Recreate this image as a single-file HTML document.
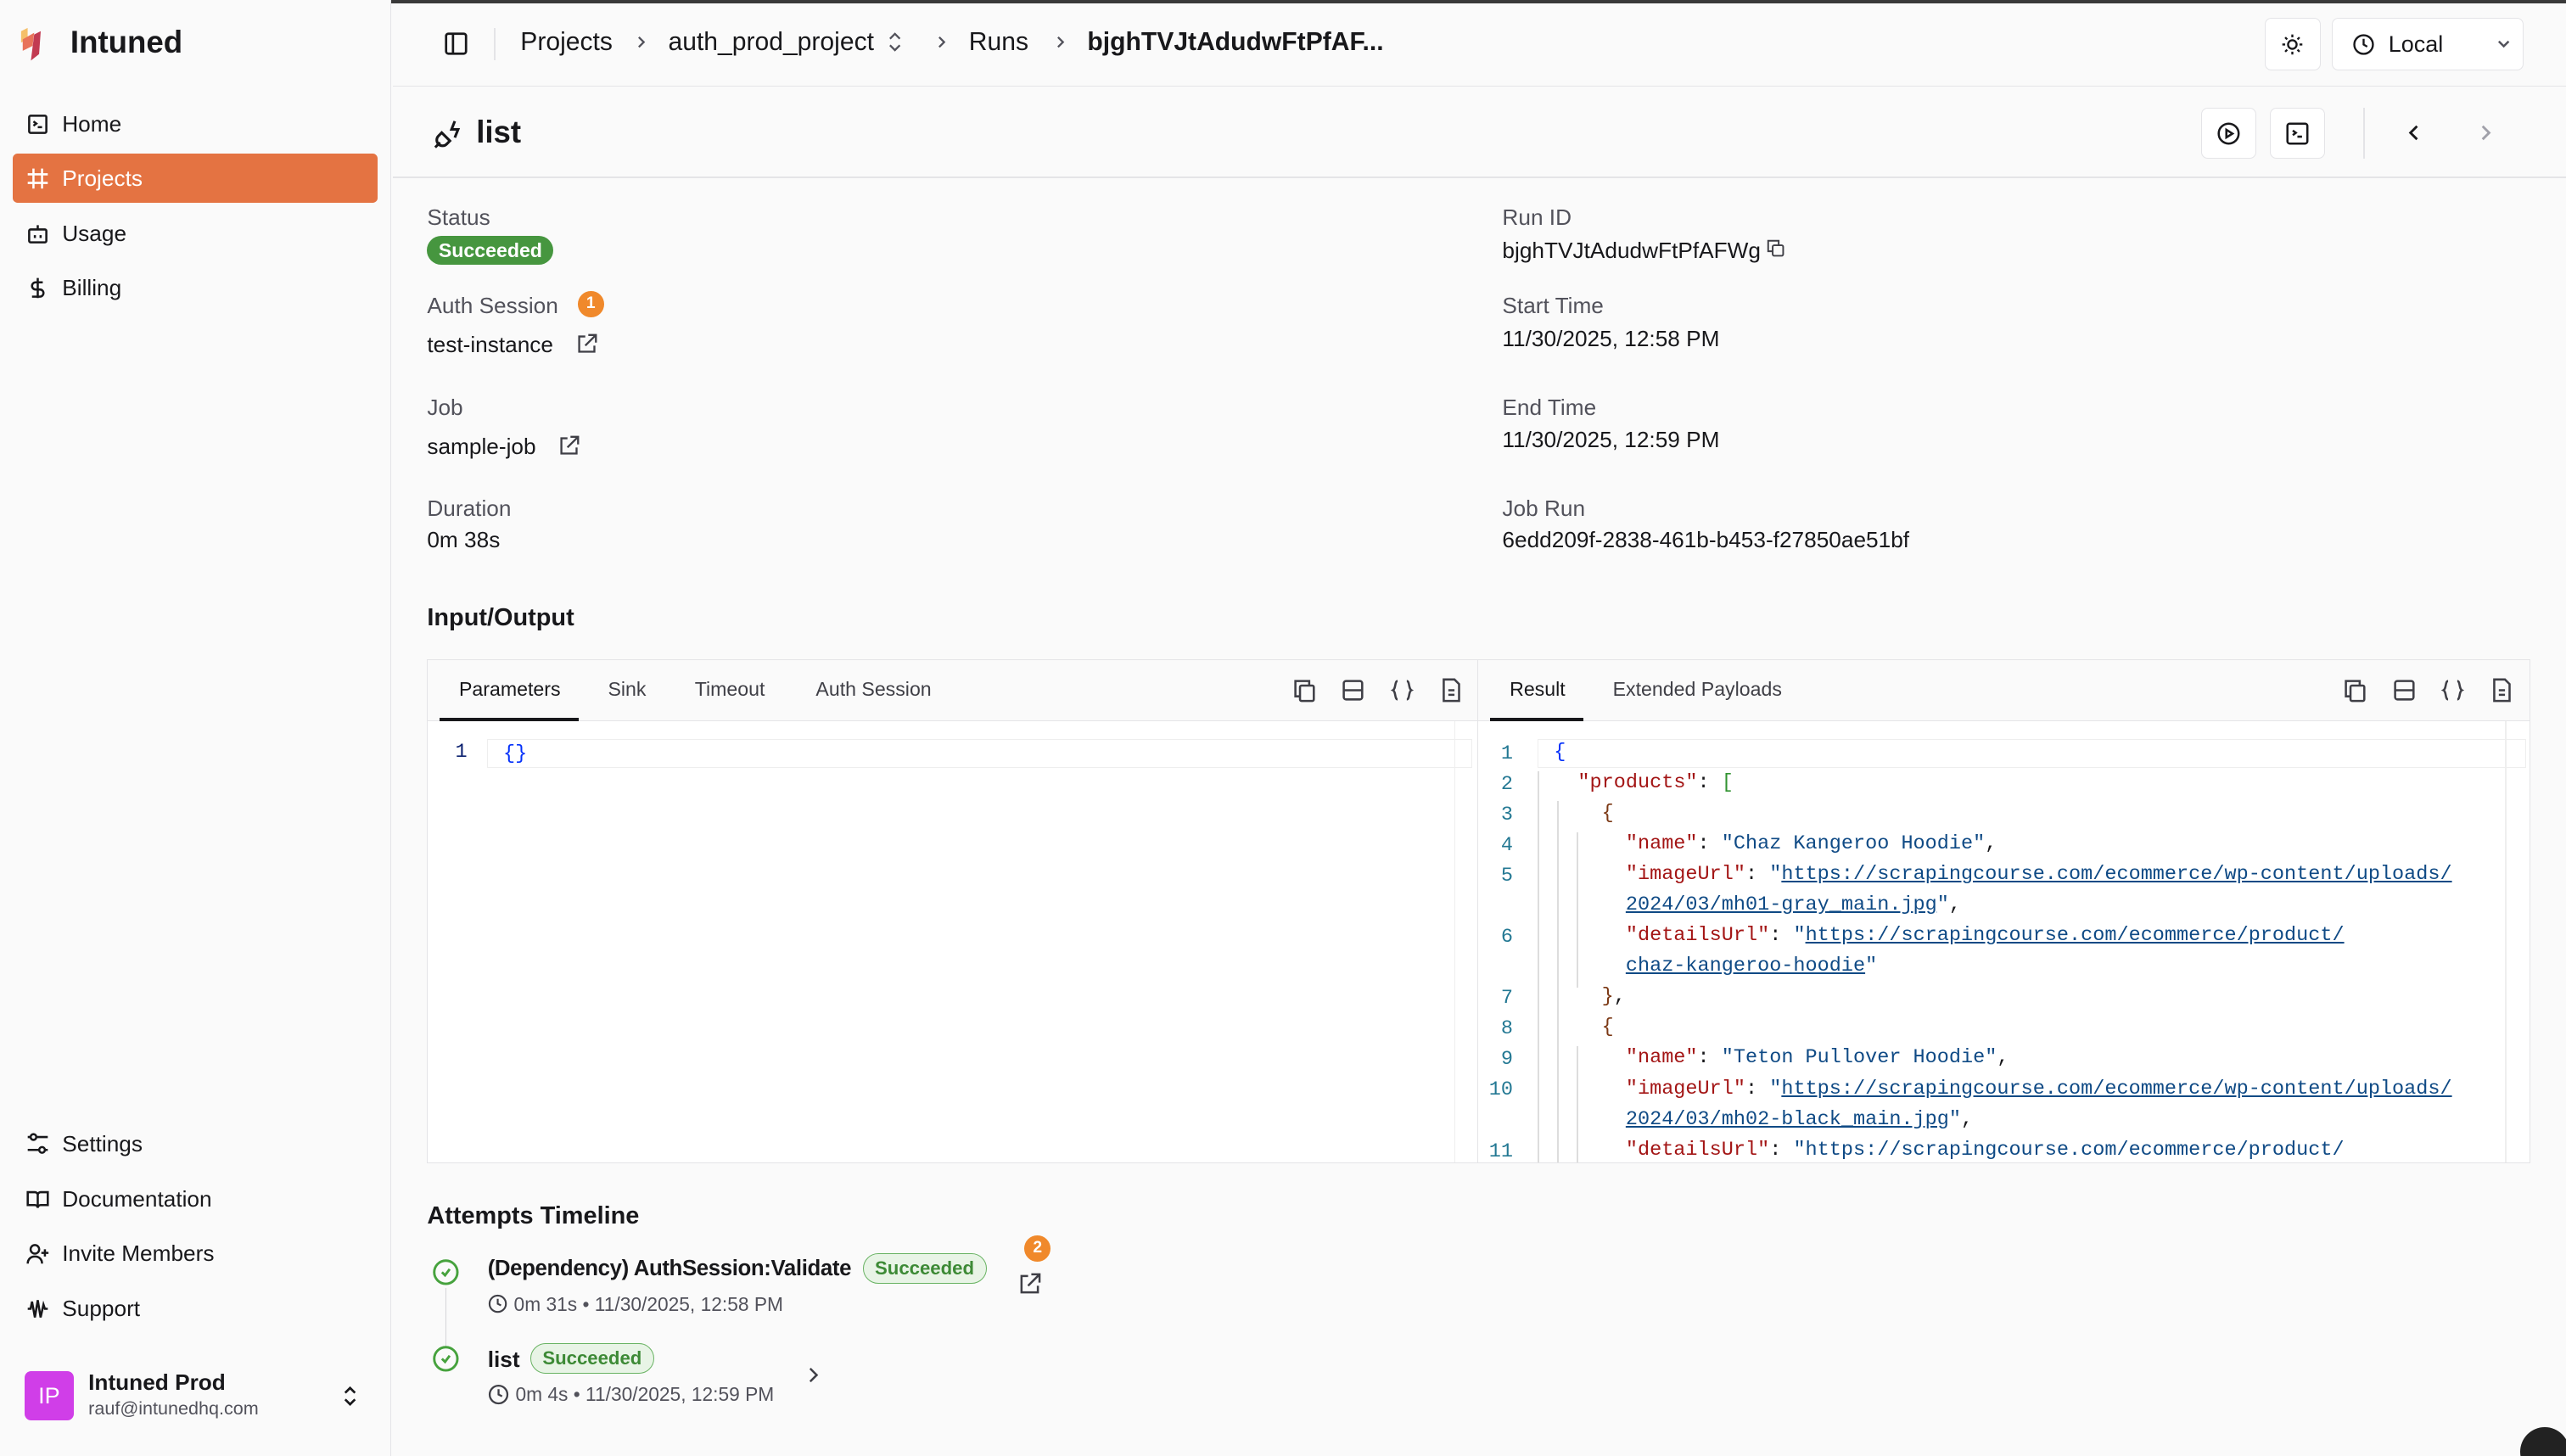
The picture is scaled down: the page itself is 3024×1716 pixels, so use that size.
<!DOCTYPE html>
<html><head><meta charset="utf-8">
<style>
*{box-sizing:border-box;margin:0;padding:0}
html,body{width:3024px;height:1716px;overflow:hidden;background:#fafafa}
#root{zoom:1.92857;width:1568px;height:890px;position:relative;font-family:"Liberation Sans",sans-serif;color:#18181b;font-size:14px}
.abs{position:absolute}
.side{left:0;top:0;width:239px;height:890px;border-right:1px solid #e4e4e7;background:#fafafa}
.nav{position:absolute;left:8px;width:223px;height:30px;display:flex;align-items:center;padding-left:8px;gap:8px;font-size:13.6px;border-radius:3px}
.nav svg{width:14px;height:14px;stroke:#18181b;fill:none;stroke-width:1.5}
.lbl{font-size:13.6px;color:#52525b}
.val{font-size:13.6px;color:#18181b}
.badge{display:inline-block;background:#46963f;color:#fff;font-size:12px;border-radius:9px;padding:2px 7px;font-weight:bold}
.obadge{display:inline-flex;width:16px;height:16px;border-radius:50%;background:#f0892b;color:#fff;font-size:10px;font-weight:bold;align-items:center;justify-content:center}
.gbadge{display:inline-block;border:1px solid #69b363;background:#e8f4e6;color:#3d8a36;font-size:11.5px;border-radius:10px;padding:2px 7px;font-weight:bold}
.panel{background:#fff;border:1px solid #e4e4e7}
.tabs{height:37px;background:#fafafa;border-bottom:1px solid #e4e4e7;position:relative}
.tab{position:absolute;top:11px;font-size:12px;color:#3f3f46}
.code{font-family:"Liberation Mono",monospace;font-size:12.2px;line-height:18.7px;white-space:pre}
.ln{position:absolute;color:#237893;font-family:"Liberation Mono",monospace;font-size:12.2px;text-align:right;width:24px}
.k{color:#a31515}.s{color:#0f4a85}.u{color:#0f4a85;text-decoration:underline}
.ico svg{stroke:#3f3f46;fill:none;stroke-width:1.4}
</style></head><body><div id="root">
<div class="abs" style="left:0;top:0;width:1568px;height:2px;background:#3a3a3a"></div>
<div class="abs side">
 <div class="abs" style="left:11px;top:15px;width:22px;height:24px">
  <svg width="22" height="24" viewBox="0 0 22 24"><path d="M2 4 L6 2 L6 9 L2 11Z" fill="#f5c06a"/><path d="M3 9 L10 5 L9 13 L3 16Z" fill="#e8735a"/><path d="M10 6 L14 4 L13 18 L8 22Z" fill="#c23b52"/></svg>
 </div>
 <div class="abs" style="left:43px;top:15px;font-size:19px;font-weight:bold">Intuned</div>
 <div class="nav" style="top:61px"><svg viewBox="0 0 16 16"><rect x="2" y="2" width="12" height="12" rx="1"/><path d="M5 6l2 1.5-2 1.5M8 10h3"/></svg>Home</div>
 <div class="nav" style="top:94px;background:#e47342;color:#fff"><svg viewBox="0 0 16 16" style="stroke:#fff"><path d="M5 1v14M11 1v14M1 5h14M1 11h14"/></svg>Projects</div>
 <div class="nav" style="top:128px"><svg viewBox="0 0 16 16"><rect x="2" y="5" width="12" height="9" rx="1"/><path d="M8 2v3M6 9v2M10 9v2"/></svg>Usage</div>
 <div class="nav" style="top:161px"><svg viewBox="0 0 16 16"><path d="M8 1v14M11.5 4H6.5a2.5 2.5 0 0 0 0 5h3a2.5 2.5 0 0 1 0 5H4"/></svg>Billing</div>
 <div class="nav" style="top:684px"><svg viewBox="0 0 16 16"><path d="M7 3h8M1 3h2M13 12h2M1 12h8"/><circle cx="5" cy="3" r="2"/><circle cx="11" cy="12" r="2"/></svg>Settings</div>
 <div class="nav" style="top:718px"><svg viewBox="0 0 16 16"><path d="M1 3h5a2 2 0 0 1 2 2v9a2 2 0 0 0-2-2H1zM15 3h-5a2 2 0 0 0-2 2v9a2 2 0 0 1 2-2h5z"/></svg>Documentation</div>
 <div class="nav" style="top:751px"><svg viewBox="0 0 16 16"><circle cx="6" cy="5" r="3"/><path d="M1 15c0-3 2-5 5-5s5 2 5 5M13 5v5M10.5 7.5h5"/></svg>Invite Members</div>
 <div class="nav" style="top:785px"><svg viewBox="0 0 16 16"><path d="M1 8h2l1-5 2 11 2-12 2 12 2-9 1 3h2"/></svg>Support</div>
 <div class="abs" style="left:15px;top:838px;width:30px;height:30px;border-radius:4px;background:#d03ee8;color:#fff;font-size:14px;display:flex;align-items:center;justify-content:center">IP</div>
 <div class="abs" style="left:54px;top:837px;font-size:13.6px;font-weight:bold">Intuned Prod</div>
 <div class="abs" style="left:54px;top:854px;font-size:11.2px;color:#52525b">rauf@intunedhq.com</div>
 <div class="abs" style="left:208px;top:845px"><svg width="12" height="16" viewBox="0 0 12 16" fill="none" stroke="#18181b" stroke-width="1.4"><path d="M3 6l3-3 3 3M3 10l3 3 3-3"/></svg></div>
</div>
<!-- header -->
<div class="abs" style="left:240px;top:2px;width:1328px;height:51px;border-bottom:1px solid #e4e4e7"></div>
<div class="abs" style="left:271px;top:19px"><svg width="15" height="15" viewBox="0 0 16 16" fill="none" stroke="#18181b" stroke-width="1.5"><rect x="1.5" y="1.5" width="13" height="13" rx="1.5"/><path d="M6 2v12"/></svg></div>
<div class="abs" style="left:302px;top:17px;width:1px;height:20px;background:#e4e4e7"></div>
<div class="abs" style="left:318px;top:17px;font-size:15.6px;display:flex;align-items:center;white-space:nowrap">
 <span>Projects</span><svg style="margin:0 12px 0 14px" width="8" height="10" viewBox="0 0 8 10" fill="none" stroke="#52525b" stroke-width="1.2"><path d="M2 2l3 3-3 3"/></svg><span>auth_prod_project</span><svg style="margin-left:8px" width="10" height="14" viewBox="0 0 10 14" fill="none" stroke="#52525b" stroke-width="1.2"><path d="M2 5l3-3 3 3M2 9l3 3 3-3"/></svg><svg style="margin:0 12px 0 20px" width="8" height="10" viewBox="0 0 8 10" fill="none" stroke="#52525b" stroke-width="1.2"><path d="M2 2l3 3-3 3"/></svg><span>Runs</span><svg style="margin:0 12px 0 16px" width="8" height="10" viewBox="0 0 8 10" fill="none" stroke="#52525b" stroke-width="1.2"><path d="M2 2l3 3-3 3"/></svg><span style="font-weight:bold">bjghTVJtAdudwFtPfAF...</span>
</div>
<div class="abs" style="left:1384px;top:11px;width:34px;height:32px;border:1px solid #e4e4e7;border-radius:4px;background:#fff;display:flex;align-items:center;justify-content:center"><svg width="14" height="14" viewBox="0 0 16 16" fill="none" stroke="#18181b" stroke-width="1.4"><circle cx="8" cy="8" r="3"/><path d="M8 1v2M8 13v2M1 8h2M13 8h2M3 3l1.4 1.4M11.6 11.6L13 13M3 13l1.4-1.4M11.6 4.4L13 3"/></svg></div>
<div class="abs" style="left:1425px;top:11px;width:117px;height:32px;border:1px solid #e4e4e7;border-radius:4px;background:#fff;font-size:14px;display:flex;align-items:center;padding-left:12px;gap:8px"><svg width="14" height="14" viewBox="0 0 16 16" fill="none" stroke="#18181b" stroke-width="1.4"><circle cx="8" cy="8" r="6.5"/><path d="M8 4v4l2.5 1.5"/></svg>Local<svg style="margin-left:24px" width="10" height="10" viewBox="0 0 10 10" fill="none" stroke="#52525b" stroke-width="1.3"><path d="M2 3.5l3 3 3-3"/></svg></div>
<!-- title -->
<div class="abs" style="left:240px;top:108px;width:1328px;height:1px;background:#e4e4e7"></div>
<div class="abs" style="left:264px;top:72px"><svg width="20" height="20" viewBox="0 0 20 20" fill="none" stroke="#18181b" stroke-width="1.6"><path d="M2 18l3-3M6 9l5 5-2 2a3 3 0 0 1-5-5zM14 2l-2 5h4l-2 5"/></svg></div>
<div class="abs" style="left:291px;top:70px;font-size:19px;font-weight:bold">list</div>
<div class="abs" style="left:1345px;top:66px;width:34px;height:31px;border:1px solid #e4e4e7;border-radius:4px;background:#fff;display:flex;align-items:center;justify-content:center"><svg width="15" height="15" viewBox="0 0 16 16" fill="none" stroke="#18181b" stroke-width="1.4"><circle cx="8" cy="8" r="6.5"/><path d="M6.5 5.5l4 2.5-4 2.5z"/></svg></div>
<div class="abs" style="left:1387px;top:66px;width:34px;height:31px;border:1px solid #e4e4e7;border-radius:4px;background:#fff;display:flex;align-items:center;justify-content:center"><svg width="15" height="15" viewBox="0 0 16 16" fill="none" stroke="#18181b" stroke-width="1.4"><rect x="1.5" y="1.5" width="13" height="13" rx="1.5"/><path d="M5 6l2 1.5-2 1.5M8 10h3"/></svg></div>
<div class="abs" style="left:1444px;top:66px;width:1px;height:31px;background:#e4e4e7"></div>
<div class="abs" style="left:1469px;top:74px"><svg width="12" height="14" viewBox="0 0 12 14" fill="none" stroke="#18181b" stroke-width="1.5"><path d="M8 3L4 7l4 4"/></svg></div>
<div class="abs" style="left:1513px;top:74px"><svg width="12" height="14" viewBox="0 0 12 14" fill="none" stroke="#a1a1aa" stroke-width="1.5"><path d="M4 3l4 4-4 4"/></svg></div>
<!-- details -->
<div class="abs lbl" style="left:261px;top:125px">Status</div>
<div class="abs" style="left:261px;top:144px"><span class="badge">Succeeded</span></div>
<div class="abs lbl" style="left:261px;top:179px">Auth Session</div>
<div class="abs" style="left:353px;top:176px"><span class="obadge">1</span></div>
<div class="abs val" style="left:261px;top:203px">test-instance</div>
<div class="abs" style="left:352px;top:204px"><svg width="13" height="13" viewBox="0 0 14 14" fill="none" stroke="#3f3f46" stroke-width="1.3"><path d="M6 2H2v10h10V8M8 1h5v5M13 1L6 8"/></svg></div>
<div class="abs lbl" style="left:261px;top:241px">Job</div>
<div class="abs val" style="left:261px;top:265px">sample-job</div>
<div class="abs" style="left:341px;top:266px"><svg width="13" height="13" viewBox="0 0 14 14" fill="none" stroke="#3f3f46" stroke-width="1.3"><path d="M6 2H2v10h10V8M8 1h5v5M13 1L6 8"/></svg></div>
<div class="abs lbl" style="left:261px;top:303px">Duration</div>
<div class="abs val" style="left:261px;top:322px">0m 38s</div>
<div class="abs lbl" style="left:918px;top:125px">Run ID</div>
<div class="abs val" style="left:918px;top:145px">bjghTVJtAdudwFtPfAFWg <svg width="11" height="11" viewBox="0 0 12 12" fill="none" stroke="#3f3f46" stroke-width="1.1"><rect x="4" y="4" width="7" height="7" rx="1"/><path d="M8 4V1H1v7h3"/></svg></div>
<div class="abs lbl" style="left:918px;top:179px">Start Time</div>
<div class="abs val" style="left:918px;top:199px">11/30/2025, 12:58 PM</div>
<div class="abs lbl" style="left:918px;top:241px">End Time</div>
<div class="abs val" style="left:918px;top:261px">11/30/2025, 12:59 PM</div>
<div class="abs lbl" style="left:918px;top:303px">Job Run</div>
<div class="abs val" style="left:918px;top:322px">6edd209f-2838-461b-b453-f27850ae51bf</div>
<div class="abs" style="left:261px;top:369px;font-size:15px;font-weight:bold">Input/Output</div>
<!-- left panel -->
<div class="abs panel" style="left:261px;top:403px;width:643px;height:308px;overflow:hidden">
 <div class="tabs">
  <div class="tab" style="left:19px;color:#18181b">Parameters</div>
  <div class="abs" style="left:7px;top:35px;width:85px;height:2px;background:#18181b"></div>
  <div class="tab" style="left:110px">Sink</div>
  <div class="tab" style="left:163px">Timeout</div>
  <div class="tab" style="left:237px">Auth Session</div>
  <div class="abs ico" style="left:528px;top:11px;display:flex;gap:15px">
   <svg width="15" height="15" viewBox="0 0 16 16"><rect x="5" y="5" width="9" height="10" rx="1"/><path d="M11 5V2H2v10h3"/></svg>
   <svg width="15" height="15" viewBox="0 0 16 16"><rect x="2" y="2" width="12" height="12" rx="1.5"/><path d="M2 8h12"/></svg>
   <svg width="15" height="15" viewBox="0 0 16 16"><path d="M5 2C3 2 4 7 2 8c2 1 1 6 3 6M11 2c2 0 1 5 3 6-2 1-1 6-3 6"/></svg>
   <svg width="15" height="15" viewBox="0 0 16 16"><path d="M3 1h7l3 3v11H3zM6 8h4M6 11h4"/></svg>
  </div>
 </div>
 <div class="abs" style="left:36px;top:48px;width:602px;height:18px;border:1px solid #eee"></div>
 <div class="ln" style="left:0;top:49px;color:#0b216f">1</div>
 <div class="abs code" style="left:46px;top:48px;color:#0431fa">{}</div>
 <div class="abs" style="left:627px;top:37px;width:1px;height:270px;background:#eee"></div>
</div>
<!-- right panel -->
<div class="abs panel" style="left:903px;top:403px;width:643px;height:308px;overflow:hidden">
 <div class="tabs">
  <div class="tab" style="left:19px;color:#18181b">Result</div>
  <div class="abs" style="left:7px;top:35px;width:57px;height:2px;background:#18181b"></div>
  <div class="tab" style="left:82px">Extended Payloads</div>
  <div class="abs ico" style="left:528px;top:11px;display:flex;gap:15px">
   <svg width="15" height="15" viewBox="0 0 16 16"><rect x="5" y="5" width="9" height="10" rx="1"/><path d="M11 5V2H2v10h3"/></svg>
   <svg width="15" height="15" viewBox="0 0 16 16"><rect x="2" y="2" width="12" height="12" rx="1.5"/><path d="M2 8h12"/></svg>
   <svg width="15" height="15" viewBox="0 0 16 16"><path d="M5 2C3 2 4 7 2 8c2 1 1 6 3 6M11 2c2 0 1 5 3 6-2 1-1 6-3 6"/></svg>
   <svg width="15" height="15" viewBox="0 0 16 16"><path d="M3 1h7l3 3v11H3zM6 8h4M6 11h4"/></svg>
  </div>
 </div>
 <div class="abs" style="left:36px;top:48px;width:604px;height:18px;border:1px solid #eee"></div>
 <div class="abs" style="left:36px;top:68px;width:1px;height:240px;background:#ddd"></div>
 <div class="abs" style="left:48px;top:86px;width:1px;height:222px;background:#ddd"></div>
 <div class="abs" style="left:60px;top:105px;width:1px;height:95px;background:#ddd"></div>
 <div class="abs" style="left:60px;top:236px;width:1px;height:72px;background:#ddd"></div>
 <div class="abs" style="left:627px;top:37px;width:1px;height:270px;background:#eee"></div>
 <div class="ln" style="left:-3px;top:48px;line-height:18.7px;white-space:pre">1
2
3
4
5

6

7
8
9
10

11</div>
 <div class="abs code" style="left:46px;top:47px"><span style="color:#0431fa">{</span>
  <span class="k">"products"</span>: <span style="color:#319331">[</span>
    <span style="color:#7b3814">{</span>
      <span class="k">"name"</span>: <span class="s">"Chaz Kangeroo Hoodie"</span>,
      <span class="k">"imageUrl"</span>: <span class="s">"<span class="u">https://scrapingcourse.com/ecommerce/wp-content/uploads/</span></span>
      <span class="u">2024/03/mh01-gray_main.jpg</span><span class="s">"</span>,
      <span class="k">"detailsUrl"</span>: <span class="s">"<span class="u">https://scrapingcourse.com/ecommerce/product/</span></span>
      <span class="u">chaz-kangeroo-hoodie</span><span class="s">"</span>
    <span style="color:#7b3814">}</span>,
    <span style="color:#7b3814">{</span>
      <span class="k">"name"</span>: <span class="s">"Teton Pullover Hoodie"</span>,
      <span class="k">"imageUrl"</span>: <span class="s">"<span class="u">https://scrapingcourse.com/ecommerce/wp-content/uploads/</span></span>
      <span class="u">2024/03/mh02-black_main.jpg</span><span class="s">"</span>,
      <span class="k">"detailsUrl"</span>: <span class="s">"https://scrapingcourse.com/ecommerce/product/</span></div>
</div>
<!-- timeline -->
<div class="abs" style="left:261px;top:735px;font-size:15px;font-weight:bold">Attempts Timeline</div>
<div class="abs" style="left:272px;top:787px;width:1px;height:37px;background:#d4d4d8"></div>
<div class="abs" style="left:264px;top:769px"><svg width="17" height="17" viewBox="0 0 18 18" fill="none" stroke="#46a23d" stroke-width="1.6"><circle cx="9" cy="9" r="7.5"/><path d="M6.5 9l2 2 3-4"/></svg></div>
<div class="abs" style="left:298px;top:766px;display:flex;align-items:center;gap:7px;white-space:nowrap"><span style="font-size:13.4px;font-weight:bold;letter-spacing:-0.2px">(Dependency) AuthSession:Validate</span><span class="gbadge">Succeeded</span></div>
<div class="abs" style="left:626px;top:753px"><span class="obadge">2</span></div>
<div class="abs" style="left:622px;top:778px"><svg width="14" height="14" viewBox="0 0 14 14" fill="none" stroke="#3f3f46" stroke-width="1.3"><path d="M6 2H2v10h10V8M8 1h5v5M13 1L6 8"/></svg></div>
<div class="abs" style="left:298px;top:790px;font-size:11.8px;color:#52525b;display:flex;align-items:center;gap:4px"><svg width="12" height="12" viewBox="0 0 12 12" fill="none" stroke="#3f3f46" stroke-width="1.1"><circle cx="6" cy="6" r="5"/><path d="M6 3v3l2 1"/></svg>0m 31s • 11/30/2025, 12:58 PM</div>
<div class="abs" style="left:264px;top:822px"><svg width="17" height="17" viewBox="0 0 18 18" fill="none" stroke="#46a23d" stroke-width="1.6"><circle cx="9" cy="9" r="7.5"/><path d="M6.5 9l2 2 3-4"/></svg></div>
<div class="abs" style="left:298px;top:823px;font-size:13.6px;font-weight:bold">list</div>
<div class="abs" style="left:324px;top:821px"><span class="gbadge">Succeeded</span></div>
<div class="abs" style="left:298px;top:845px;font-size:11.8px;color:#52525b;display:flex;align-items:center;gap:4px"><svg width="13" height="13" viewBox="0 0 12 12" fill="none" stroke="#3f3f46" stroke-width="1.1"><circle cx="6" cy="6" r="5"/><path d="M6 3v3l2 1"/></svg>0m 4s • 11/30/2025, 12:59 PM</div>
<div class="abs" style="left:492px;top:834px"><svg width="10" height="12" viewBox="0 0 10 12" fill="none" stroke="#3f3f46" stroke-width="1.3"><path d="M3 2l4 4-4 4"/></svg></div>
<div class="abs" style="left:1540px;top:872px;width:30px;height:30px;border-radius:50%;background:#222"></div>
</div></body></html>
